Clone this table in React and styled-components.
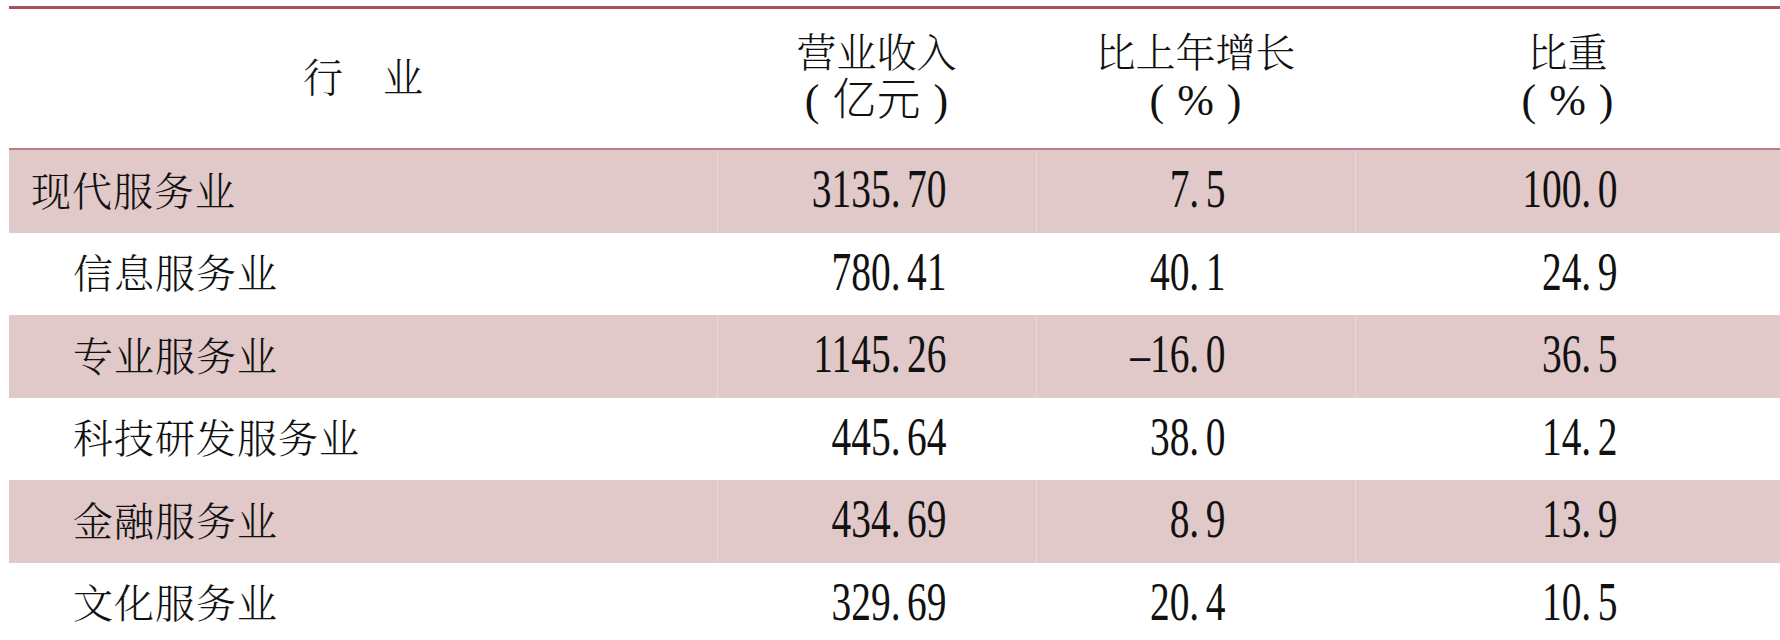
import React from "react";
import styled, { createGlobalStyle } from "styled-components";

const rows = [
  { name: "现代服务业", revenue: "3135.70", growth: "7.5", share: "100.0", shaded: true, level: 0 },
  { name: "信息服务业", revenue: "780.41", growth: "40.1", share: "24.9", level: 1 },
  { name: "专业服务业", revenue: "1145.26", growth: "–16.0", share: "36.5", shaded: true, level: 1 },
  { name: "科技研发服务业", revenue: "445.64", growth: "38.0", share: "14.2", level: 1 },
  { name: "金融服务业", revenue: "434.69", growth: "8.9", share: "13.9", shaded: true, level: 1 },
  { name: "文化服务业", revenue: "329.69", growth: "20.4", share: "10.5", level: 1 },
];

const cols = "708px 319px 319px 1fr";

function Num({ value }) {
  const [int, dec] = value.split(".");
  return (
    <Digits>
      {int}
      <Dot>.</Dot>
      {dec}
    </Digits>
  );
}

export default function App() {
  return (
    <>
      <GlobalStyle />
      <Page>
        <Table>
          <HeadRow>
            <HeadCell>
              <span>行　业</span>
            </HeadCell>
            <HeadCell>
              <span>营业收入</span>
              <Unit>( 亿元 )</Unit>
            </HeadCell>
            <HeadCell>
              <span>比上年增长</span>
              <Unit>( % )</Unit>
            </HeadCell>
            <HeadCell>
              <span>比重</span>
              <Unit>( % )</Unit>
            </HeadCell>
          </HeadRow>
          {rows.map((r) => (
            <Row key={r.name} $shaded={r.shaded}>
              <NameCell $level={r.level}>{r.name}</NameCell>
              <NumCell $pad={90}>
                <Num value={r.revenue} />
              </NumCell>
              <NumCell $pad={130}>
                <Num value={r.growth} />
              </NumCell>
              <NumCell $pad={163}>
                <Num value={r.share} />
              </NumCell>
            </Row>
          ))}
        </Table>
      </Page>
    </>
  );
}

const GlobalStyle = createGlobalStyle`
  html, body {
    margin: 0;
    background: #ffffff;
    overflow: hidden;
  }
  body {
    font-family: "Noto Serif CJK SC", "Noto Sans CJK SC", sans-serif;
    color: #111111;
  }
`;

const Page = styled.div`
  width: 1780px;
  height: 640px;
  padding: 6px 0 0 9px;
  box-sizing: border-box;
  overflow: hidden;
`;

const Table = styled.div`
  display: flex;
  flex-direction: column;
  width: 1771px;
`;

const HeadRow = styled.div`
  display: grid;
  grid-template-columns: ${cols};
  height: 144px;
  box-sizing: border-box;
  border-top: 3px solid #a6525f;
  border-bottom: 2px solid #ba7c88;
  background: #ffffff;
`;

const HeadCell = styled.div`
  display: flex;
  flex-direction: column;
  align-items: center;
  justify-content: center;
  font-size: 40px;
  font-weight: 300;
  line-height: 51px;
  padding-bottom: 8px;
`;

const Unit = styled.span`
  font-family: "Liberation Serif", "Noto Sans CJK SC", serif;
  font-size: 44px;
  word-spacing: 2px;
`;

const Row = styled.div`
  display: grid;
  grid-template-columns: ${cols};
  height: 82.5px;
  background: ${(p) => (p.$shaded ? "#e1c9c9" : "#ffffff")};

  & > * + * {
    border-left: 1px solid ${(p) => (p.$shaded ? "#e9d7d7" : "transparent")};
  }
`;

const NameCell = styled.div`
  display: flex;
  align-items: center;
  padding-left: ${(p) => (p.$level ? 64 : 22)}px;
  padding-bottom: 6px;
  font-size: 40px;
  font-weight: 300;
  letter-spacing: 1px;
`;

const NumCell = styled.div`
  display: flex;
  align-items: center;
  justify-content: flex-end;
  padding-right: ${(p) => p.$pad}px;
  padding-bottom: 4px;
`;

const Digits = styled.span`
  display: inline-block;
  font-family: "Liberation Serif", serif;
  font-size: 54px;
  line-height: 1;
  transform: scaleX(0.73);
  transform-origin: right center;
  white-space: nowrap;
`;

const Dot = styled.span`
  margin-right: 9px;
`;
